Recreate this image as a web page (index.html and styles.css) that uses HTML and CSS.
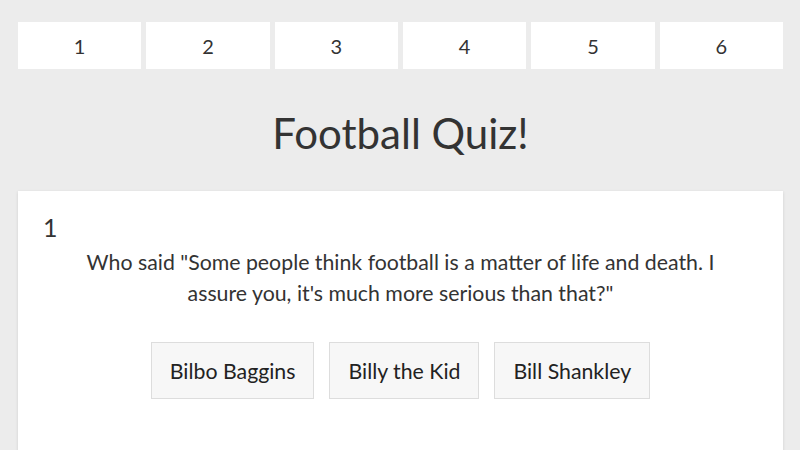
FILE: index.html
```html
<!DOCTYPE html>
<html lang="en">
<head>
<meta charset="utf-8">
<title>Football Quiz</title>
<link rel="stylesheet" href="styles.css">
</head>
<body>
<div class="page">
  <nav class="tabs">
    <div class="tab">1</div>
    <div class="tab">2</div>
    <div class="tab">3</div>
    <div class="tab">4</div>
    <div class="tab">5</div>
    <div class="tab">6</div>
  </nav>
  <h1 class="title">Football Quiz!</h1>
  <section class="card">
    <div class="qnum">1</div>
    <p class="question">Who said "Some people think football is a matter of life and death. I assure you, it's much more serious than that?"</p>
    <div class="answers">
      <button class="answer">Bilbo Baggins</button>
      <button class="answer">Billy the Kid</button>
      <button class="answer">Bill Shankley</button>
    </div>
  </section>
</div>
</body>
</html>
```
FILE: styles.css
```css
html, body {
  margin: 0;
  padding: 0;
  background: #ececec;
  height: 100%;
  overflow: hidden;
}
body {
  font-family: "Lato", "Open Sans", sans-serif;
  color: #333;
}
.page {
  padding: 22px 17px 0 18px;
}
.tabs {
  display: flex;
  gap: 5px;
}
.tab {
  flex: 1;
  height: 47px;
  background: #fff;
  display: flex;
  align-items: center;
  justify-content: center;
  font-size: 20px;
  color: #333;
}
.title {
  margin: 42px 0 0;
  text-align: center;
  font-weight: 400;
  font-size: 42px;
  line-height: 44px;
  color: #333;
}
.card {
  margin-top: 36px;
  background: #fff;
  box-shadow: 0 1px 3px rgba(0,0,0,0.12);
  padding: 22px 25px 60px;
}
.qnum {
  font-size: 25px;
  line-height: 28px;
}
.question {
  margin: 6px auto 0;
  max-width: 660px;
  text-align: center;
  font-size: 21.3px;
  line-height: 31px;
}
.answers {
  display: flex;
  justify-content: center;
  gap: 15px;
  margin-top: 33px;
}
.answer {
  font-family: inherit;
  font-size: 21.3px;
  color: #222;
  background: #f7f7f7;
  border: 1px solid #ddd;
  height: 57px;
  padding: 0 18px;
}
```
